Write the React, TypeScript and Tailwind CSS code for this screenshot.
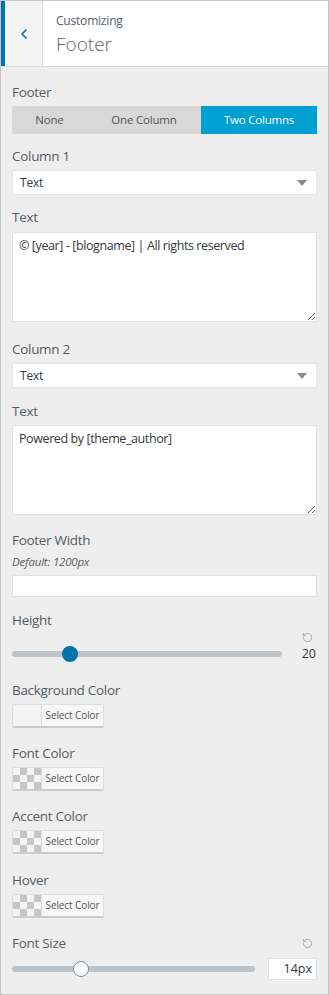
import React from 'react';
import { ChevronLeft, RotateCcw } from 'lucide-react';

const font = { fontFamily: '"Open Sans", "Noto Sans", sans-serif' };

const Label = ({ children, className = '' }: { children: React.ReactNode; className?: string }) => (
  <div className={`text-[13.5px] leading-[24px] font-medium text-[#555d66] tracking-[-0.3px] ${className}`}>{children}</div>
);

const SelectBox = () => (
  <div className="flex h-[25px] items-center justify-between bg-white pl-2 pr-[10px] text-[12px] tracking-[-0.2px] text-[#32373c] shadow-[0_0_0_1px_#e6e6e6_inset]">
    <span>Text</span>
    <span className="h-0 w-0 border-x-[5px] border-t-[6px] border-x-transparent border-t-[#8a8a8a]" />
  </div>
);

const TextBox = ({ value }: { value: string }) => (
  <textarea
    readOnly
    defaultValue={value}
    className="block h-[90px] w-full border border-[#e2e2e2] bg-white px-[6px] py-[4px] text-[12.5px] leading-[18px] tracking-[-0.4px] text-[#32373c] outline-none"
  />
);

const ColorButton = ({ plain = false }: { plain?: boolean }) => (
  <div className="flex h-[23px] w-[92px] overflow-hidden rounded-[2px] border border-[#ddd] border-b-[#ccc] shadow-[0_1px_0_#ccc]">
    <div
      className={
        plain
          ? 'w-[28px] bg-[#f3f3f3]'
          : 'w-[28px] bg-[repeating-conic-gradient(#c6c6c6_0_25%,#f4f4f4_0_50%)] bg-size-[14px_14px]'
      }
    />
    <div className="flex flex-1 items-center justify-center border-l border-[#ddd] bg-[#f7f7f7] text-[10px] tracking-[-0.1px] text-[#555]">
      Select Color
    </div>
  </div>
);

export default function App() {
  return (
    <div style={font} className="flex h-[995px] w-[329px] flex-col border border-[#c5c5c5] bg-[#eeeeee]">
      <div className="flex h-[66px] shrink-0 border-b border-[#dddddd] bg-white">
        <div className="flex w-[42px] items-center justify-center border-l-4 border-r border-l-[#0073aa] border-r-[#dddddd] bg-[#f3f3f3]">
          <ChevronLeft size={16} strokeWidth={2.6} className="text-[#0073aa]" />
        </div>
        <div className="flex flex-col pl-[13px] pt-[10px]">
          <span className="text-[12px] leading-[20px] tracking-[-0.2px] text-[#555d66]">Customizing</span>
          <span className="text-[19px] font-light leading-[26px] text-[#666]">Footer</span>
        </div>
      </div>

      <div className="flex flex-col px-[11px] pt-[13px]">
        <Label className="mb-[2px]">Footer</Label>
        <div className="flex h-[28px] text-[11.5px] tracking-[-0.2px]">
          <div className="flex w-[75px] items-center justify-center bg-[#d8d8d8] text-[#555]">None</div>
          <div className="flex w-[114px] items-center justify-center bg-[#d8d8d8] text-[#555]">One Column</div>
          <div className="flex flex-1 items-center justify-center bg-[#00a0d2] text-white">Two Columns</div>
        </div>

        <Label className="mb-[2px] mt-[10px]">Column 1</Label>
        <SelectBox />
        <Label className="mb-[3px] mt-[10px]">Text</Label>
        <TextBox value="© [year] - [blogname] | All rights reserved" />

        <Label className="mb-[2px] mt-[15px]">Column 2</Label>
        <SelectBox />
        <Label className="mb-[2px] mt-[11px]">Text</Label>
        <TextBox value="Powered by [theme_author]" />

        <Label className="mt-[13px]">Footer Width</Label>
        <div className="mt-[2px] text-[11.5px] italic leading-[16px] tracking-[-0.2px] text-[#555d66]">Default: 1200px</div>
        <div className="mt-[5px] h-[22px] border border-[#e2e2e2] bg-white" />

        <Label className="mt-[11px]">Height</Label>
        <div className="flex h-[12px] justify-end pr-[4px]">
          <RotateCcw size={11} strokeWidth={2} className="text-[#a0a5aa]" />
        </div>
        <div className="flex h-[20px] items-center">
          <div className="relative h-[6px] w-[270px] rounded-full bg-[#bdc3c7]">
            <div className="absolute left-[50px] top-[-5px] h-[16px] w-[16px] rounded-full bg-[#0073aa]" />
          </div>
          <span className="ml-auto pr-[1px] text-[12.5px] text-[#32373c]">20</span>
        </div>

        <Label className="mb-[2px] mt-[14px]">Background Color</Label>
        <ColorButton plain />
        <Label className="mb-[2px] mt-[14px]">Font Color</Label>
        <ColorButton />
        <Label className="mb-[2px] mt-[14px]">Accent Color</Label>
        <ColorButton />
        <Label className="mb-[2px] mt-[15px]">Hover</Label>
        <ColorButton />

        <div className="mt-[14px] flex items-center justify-between">
          <Label>Font Size</Label>
          <RotateCcw size={11} strokeWidth={2} className="mr-[4px] text-[#a0a5aa]" />
        </div>
        <div className="mt-[3px] flex h-[22px] items-center">
          <div className="relative h-[6px] w-[243px] rounded-full bg-[#bdc3c7]">
            <div className="absolute left-[61px] top-[-5px] h-[16px] w-[16px] rounded-full border border-[#7e8993] bg-white" />
          </div>
          <div className="ml-auto flex h-[22px] w-[49px] items-center justify-end border border-[#e2e2e2] bg-white pr-[4px] text-[12.5px] text-[#32373c]">
            14px
          </div>
        </div>
      </div>
    </div>
  );
}
